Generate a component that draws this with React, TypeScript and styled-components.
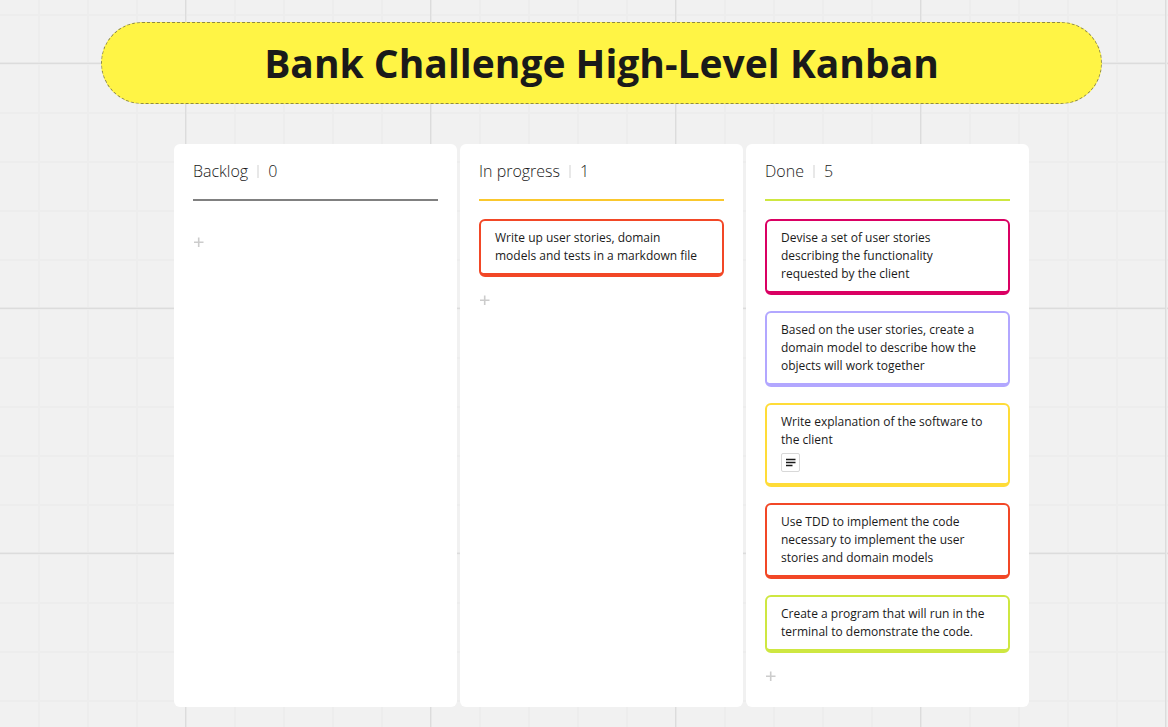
import React from "react";
import styled, { createGlobalStyle } from "styled-components";

const GlobalStyle = createGlobalStyle`
  * {
    box-sizing: border-box;
  }

  body {
    margin: 0;
    font-family: "Open Sans", "Noto Sans", sans-serif;
    color: #1a1a1a;
    background-color: #f1f1f1;
  }
`;

const Page = styled.main`
  min-height: 100vh;
  padding: 22px 66px 20px 101px;
  background-image:
    linear-gradient(90deg, #dcdcdc 1px, #e8e8e8 1px, #e8e8e8 2px, transparent 2px),
    linear-gradient(#e8e8e8 1px, #dcdcdc 1px, #dcdcdc 2px, transparent 2px),
    linear-gradient(90deg, #ededed 2px, transparent 2px),
    linear-gradient(#ededed 2px, transparent 2px);
  background-size: 245px 245px, 245px 245px, 49px 49px, 49px 49px;
  background-position: 185px 62px, 185px 62px, 38px 14px, 38px 14px;
`;

const Banner = styled.header`
  display: flex;
  align-items: center;
  justify-content: center;
  min-height: 82px;
  border: 1px dashed #8f8a45;
  border-radius: 41px;
  background: #fff445;
`;

const Title = styled.h1`
  margin: 0;
  font-size: 39px;
  line-height: 56px;
  font-weight: 700;
`;

const Board = styled.div`
  display: grid;
  grid-template-columns: repeat(3, minmax(0, 1fr));
  gap: 3px;
  margin: 40px 73px 0;
`;

const Column = styled.section`
  padding: 15px 19px 21px;
  border-radius: 6px;
  background: #fff;
`;

const ColumnHeader = styled.div<{ $color: string }>`
  display: flex;
  align-items: center;
  padding-bottom: 15px;
  border-bottom: 2px solid ${({ $color }) => $color};
`;

const ColumnName = styled.h2`
  margin: 0;
  font-size: 16px;
  line-height: 25px;
  font-weight: 300;
`;

const Count = styled.span`
  display: flex;
  align-items: center;
  font-size: 16px;
  line-height: 25px;
  font-weight: 300;

  &::before {
    content: "";
    width: 2px;
    height: 13px;
    margin: 0 9px;
    background: #e8e8e8;
  }
`;

const CardList = styled.ul`
  display: flex;
  flex-direction: column;
  gap: 16px;
  margin: 18px 0 0;
  padding: 0;
  list-style: none;
`;

const Card = styled.li<{ $color: string }>`
  padding: 8px 18px 8px 14px;
  border: 2px solid ${({ $color }) => $color};
  border-bottom-width: 4px;
  border-radius: 6px;
  font-size: 12px;
  line-height: 18px;
`;

const CardText = styled.p`
  margin: 0;
`;

const NoteButton = styled.button`
  display: flex;
  align-items: center;
  justify-content: center;
  width: 19px;
  height: 19px;
  margin: 4px 0 3px;
  padding: 0;
  border: 1px solid #d8d8d8;
  border-radius: 2px;
  background: #fff;
`;

const AddButton = styled.button`
  display: flex;
  align-items: center;
  width: 20px;
  height: 20px;
  margin-top: 13px;
  padding: 0;
  border: 0;
  background: none;
`;

interface Task {
  text: string;
  color: string;
  note?: boolean;
}

interface ColumnData {
  name: string;
  color: string;
  tasks: Task[];
}

const columns: ColumnData[] = [
  { name: "Backlog", color: "#808080", tasks: [] },
  {
    name: "In progress",
    color: "#fac82d",
    tasks: [
      {
        text: "Write up user stories, domain models and tests in a markdown file",
        color: "#f24726",
      },
    ],
  },
  {
    name: "Done",
    color: "#cee741",
    tasks: [
      {
        text: "Devise a set of user stories describing the functionality requested by the client",
        color: "#da0063",
      },
      {
        text: "Based on the user stories, create a domain model to describe how the objects will work together",
        color: "#b2a7ff",
      },
      {
        text: "Write explanation of the software to the client",
        color: "#ffdc38",
        note: true,
      },
      {
        text: "Use TDD to implement the code necessary to implement the user stories and domain models",
        color: "#f24726",
      },
      {
        text: "Create a program that will run in the terminal to demonstrate the code.",
        color: "#cee741",
      },
    ],
  },
];

export default function App() {
  return (
    <>
      <GlobalStyle />
      <Page>
        <Banner>
          <Title>Bank Challenge High-Level Kanban</Title>
        </Banner>
        <Board>
          {columns.map((column) => (
            <Column key={column.name}>
              <ColumnHeader $color={column.color}>
                <ColumnName>{column.name}</ColumnName>
                <Count>{column.tasks.length}</Count>
              </ColumnHeader>
              <CardList>
                {column.tasks.map((task) => (
                  <Card key={task.text} $color={task.color}>
                    <CardText>{task.text}</CardText>
                    {task.note && (
                      <NoteButton type="button" aria-label="Show description">
                        <svg width="11" height="9" viewBox="0 0 11 9" fill="#1a1a1a">
                          <path d="M1 .8h9.5v1.4H1zM1 3.8h9.5v1.4H1zM1 6.8h6.5v1.4H1z" />
                        </svg>
                      </NoteButton>
                    )}
                  </Card>
                ))}
              </CardList>
              <AddButton type="button" aria-label={`Add card to ${column.name}`}>
                <svg width="11" height="11" viewBox="0 0 11 11" stroke="#cccccc" strokeWidth="1.6">
                  <path d="M1 5.3h9.5M5.7.6v9.4" />
                </svg>
              </AddButton>
            </Column>
          ))}
        </Board>
      </Page>
    </>
  );
}
